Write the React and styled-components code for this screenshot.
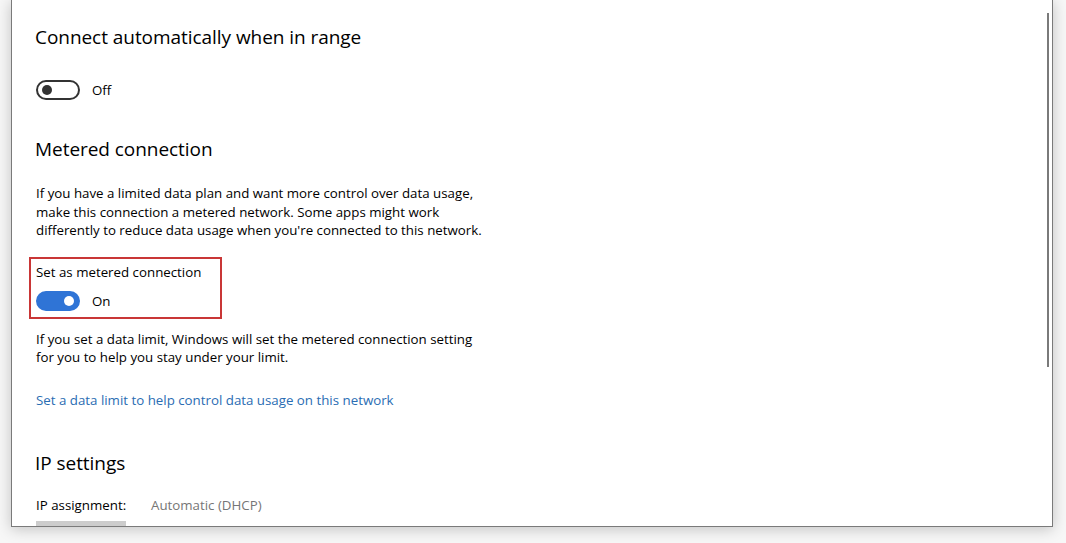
import styled, { createGlobalStyle } from 'styled-components';

const GlobalStyle = createGlobalStyle`
  html, body {
    margin: 0;
    padding: 0;
    background: #f7f7f7;
    overflow: hidden;
  }
  body {
    font-family: "Open Sans", "Noto Sans", sans-serif;
    color: #000;
  }
`;

const Stage = styled.div`
  width: 1066px;
  height: 543px;
  padding-left: 11px;
  box-sizing: border-box;
`;

const Window = styled.div`
  position: relative;
  width: 1042px;
  height: 527px;
  box-sizing: border-box;
  background: #fff;
  border: 1px solid #7a7a7a;
  border-top: none;
  box-shadow: 0 2px 14px rgba(0, 0, 0, 0.22);
  padding: 24px 0 0 24px;
  overflow: hidden;
`;

const Scrollbar = styled.div`
  position: absolute;
  top: 13px;
  right: 3px;
  width: 2px;
  height: 354px;
  background: #7a7a7a;
`;

const Heading = styled.h2`
  margin: ${(p) => p.$top || 0}px 0 0 -1px;
  font-size: 19px;
  font-weight: 400;
  line-height: 26px;
  letter-spacing: -0.05px;
`;

const Text = styled.p`
  margin: ${(p) => p.$top || 0}px 0 0;
  font-size: 13.3px;
  line-height: 18.5px;
  width: 446px;
  color: #000;
`;

const ToggleRow = styled.div`
  display: flex;
  align-items: center;
  gap: 12px;
  margin-top: ${(p) => p.$top || 0}px;
  font-size: 13.3px;
`;

const Track = styled.span`
  position: relative;
  width: 44px;
  height: 20px;
  box-sizing: border-box;
  border-radius: 10px;
  border: 2px solid ${(p) => (p.$on ? '#2f74d6' : '#333')};
  background: ${(p) => (p.$on ? '#2f74d6' : '#fff')};
`;

const Knob = styled.span`
  position: absolute;
  top: 3px;
  left: ${(p) => (p.$on ? '26px' : '4px')};
  width: 10px;
  height: 10px;
  border-radius: 50%;
  background: ${(p) => (p.$on ? '#fff' : '#333')};
`;

const Highlight = styled.div`
  margin: 17px 0 0 -7px;
  width: 193px;
  height: 62px;
  box-sizing: border-box;
  border: 2px solid #c93636;
  padding: 4px 0 0 5px;
`;

const Label = styled.div`
  font-size: 13.3px;
  line-height: 18px;
`;

const Link = styled.a`
  display: block;
  margin-top: 24px;
  font-size: 13.3px;
  line-height: 19px;
  color: #2a6db3;
  text-decoration: none;
`;

const InfoRow = styled.div`
  display: grid;
  grid-template-columns: 115px auto;
  margin-top: 20px;
  font-size: 13.3px;
  line-height: 19px;
`;

const Value = styled.span`
  color: #767676;
`;

const Button = styled.div`
  margin-top: 6px;
  width: 90px;
  height: 10px;
  background: #cccccc;
`;

const Toggle = ({ on, label, top }) => (
  <ToggleRow $top={top}>
    <Track $on={on}>
      <Knob $on={on} />
    </Track>
    <span>{label}</span>
  </ToggleRow>
);

export default function App() {
  return (
    <>
      <GlobalStyle />
      <Stage>
        <Window>
          <Heading>Connect automatically when in range</Heading>
          <Toggle on={false} label="Off" top={30} />
          <Heading $top={36}>Metered connection</Heading>
          <Text $top={22}>
            If you have a limited data plan and want more control over data usage,
            make this connection a metered network. Some apps might work
            differently to reduce data usage when you're connected to this network.
          </Text>
          <Highlight>
            <Label>Set as metered connection</Label>
            <Toggle on label="On" top={10} />
          </Highlight>
          <Text $top={11}>
            If you set a data limit, Windows will set the metered connection setting
            for you to help you stay under your limit.
          </Text>
          <Link href="#">Set a data limit to help control data usage on this network</Link>
          <Heading $top={40}>IP settings</Heading>
          <InfoRow>
            <span>IP assignment:</span>
            <Value>Automatic (DHCP)</Value>
          </InfoRow>
          <Button />
          <Scrollbar />
        </Window>
      </Stage>
    </>
  );
}
